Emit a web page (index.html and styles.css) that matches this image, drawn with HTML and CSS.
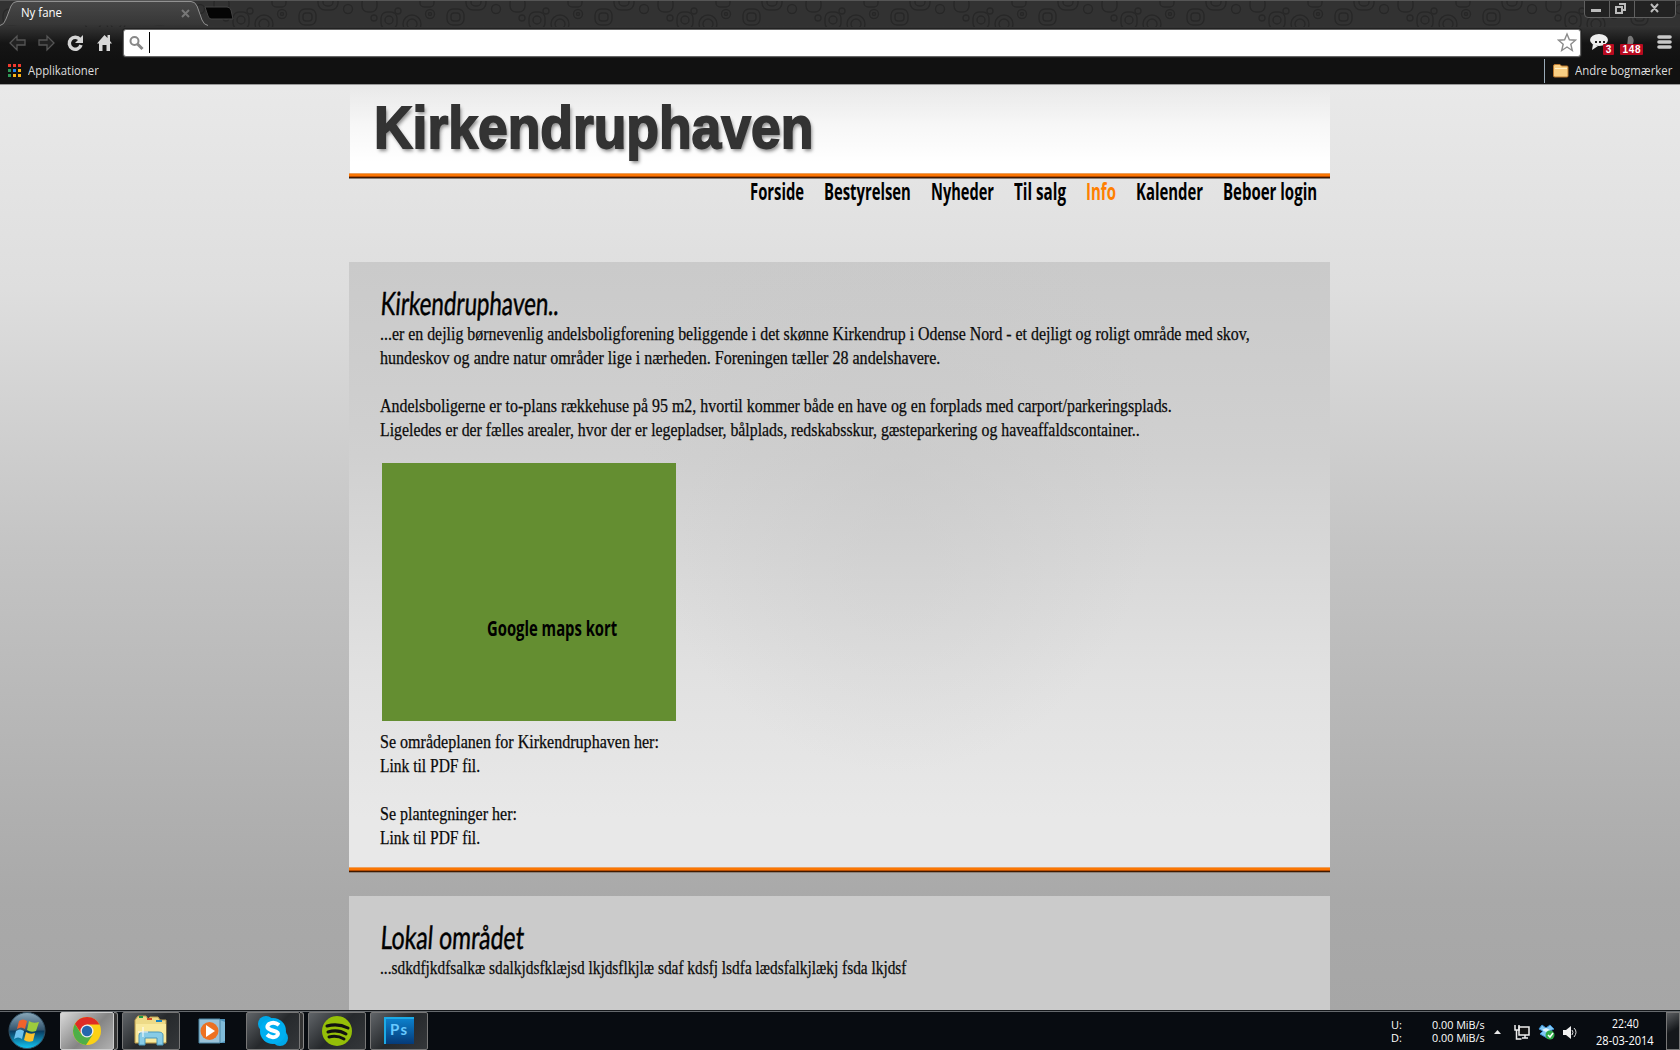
FILE: index.html
```html
<!DOCTYPE html>
<html lang="da"><head><meta charset="utf-8"><title>Ny fane</title><link rel="stylesheet" href="styles.css"></head>
<body>
<header class="chrome">
  <div class="tabs">
    <svg class="tabshape" width="238" height="26" viewBox="0 0 238 26"><defs><pattern id="rings" width="148" height="29" patternUnits="userSpaceOnUse"><g fill="none" stroke="#272727" stroke-width="1.500"><rect x="3" y="8" width="17" height="16" rx="6"/><rect x="7" y="12" width="9" height="8" rx="3"/><rect x="22" y="-8" width="20" height="17" rx="7"/><rect x="27" y="-5" width="10" height="10" rx="4"/><circle cx="52" cy="8" r="4.500"/><rect x="66" y="-4" width="15" height="15" rx="6"/><circle cx="78" cy="17" r="3"/><rect x="85" y="11" width="16" height="17" rx="6"/><circle cx="93" cy="19" r="4"/><circle cx="102" cy="10" r="3"/><circle cx="116" cy="23" r="9"/><circle cx="116" cy="23" r="5"/><rect x="124" y="-5" width="14" height="11" rx="4"/><circle cx="134" cy="13" r="4.500"/><circle cx="134" cy="13" r="1.500"/></g></pattern><linearGradient id="tg" x2="0" y2="1"><stop stop-color="#484848"/><stop offset="1" stop-color="#363636"/></linearGradient></defs><path d="M0 25.500Q4 25 6 19L11 6Q13 1.500 17 1.500H191Q195 1.500 197 6L202 20Q204 25 208 25.500" fill="url(#tg)" stroke="#929292"/><path d="M205 7H227Q230 7 231 10L233 19H211Q209 19 208 16Z" fill="#050505" stroke="#444"/></svg>
    <svg class="pattern" width="1680" height="26"><rect width="1680" height="26" fill="url(#rings)"/></svg>
    <span class="tabname" data-fit="41">Ny fane</span>
    <svg class="tabclose" width="9" height="9" viewBox="0 0 9 9"><path d="M1 1l7 7M8 1L1 8" stroke="#777" stroke-width="2"/></svg>
    <svg class="winbtns" width="94" height="18" viewBox="0 0 94 18"><path d="M.5 0V13Q.5 16.500 4 16.500H88Q91.500 16.500 91.500 13V0M25.500 0V16M50.500 0V16" fill="#222" stroke="#606060"/><path d="M7 8h10v3H7z" fill="#bbb"/><g fill="none" stroke="#bbb" stroke-width="2"><path d="M35 3h6v6h-2M32 6h6v6h-6zM67 3l7 8M74 3l-7 8"/></g></svg>
  </div>
  <div class="toolbar">
    <svg width="118" height="34" viewBox="0 0 118 34"><g fill="#222" stroke="#555" stroke-width="1.300"><path d="M10 17l7-7v4h8v5h-8v5zM54 17l-7-7v4h-8v5h8v5z"/></g><path d="M80 13.500A6 6 0 1 0 81 19" fill="none" stroke="#d4d4d4" stroke-width="3.500"/><path d="M83 9v8h-8z" fill="#d4d4d4"/><path d="M97 17.500L104.500 9l3 3V9h2.500v6l2 2.500h-2V25h-3.500v-6h-4v6H99v-7.500z" fill="#d8d8d8"/></svg>
    <div class="omni"><svg width="34" height="26" viewBox="0 0 34 26"><circle cx="10.500" cy="11" r="4" fill="none" stroke="#888" stroke-width="2"/><path d="M13.500 14l5 5" stroke="#888" stroke-width="3"/><path d="M25.500 2v21" stroke="#000"/></svg><svg width="23" height="24" viewBox="0 0 23 24"><path d="M10 3l2.400 5.800 6.100.4-4.700 4 1.500 6.300L10 16l-5.300 3.500 1.500-6.300-4.700-4 6.100-.4z" fill="#fff" stroke="#8b8b8b" stroke-width="1.400"/></svg></div>
    <svg width="99" height="34" viewBox="1581 27 99 34"><ellipse cx="1599" cy="41" rx="9" ry="6" fill="#eee"/><path d="M1593 45l-1 6 6-4z" fill="#eee"/><path d="M1595 43h2m2 0h2m2 0h2" stroke="#222" stroke-width="2"/><rect x="1603" y="45" width="11" height="11" rx="1" fill="#b90a20"/><text x="1608.500" y="54" class="badge">3</text><path d="M1628 38q3-3 5 1t-2 9h-4z" fill="#777"/><rect x="1620" y="45" width="23" height="11" rx="1" fill="#b90a20"/><text x="1631.500" y="54" class="badge" textLength="18">148</text><path d="M1659 38h11m-11 5h11m-11 5h11" stroke="#c8c8c8" stroke-width="3.600" stroke-linecap="round"/></svg>
  </div>
  <div class="bookmarks">
    <svg width="14" height="14" viewBox="0 0 14 14"><path d="M0 0h3v3H0zM5 0h3v3H5zM10 0h3v3h-3z" fill="#f03a2e"/><path d="M0 5h3v3H0zM0 10h3v3H0z" fill="#2f9a58"/><path d="M5 5h3v3H5z" fill="#2385ef"/><path d="M10 5h3v3h-3zM5 10h3v3H5zM10 10h3v3h-3z" fill="#fbb117"/></svg>
    <span class="bm" data-fit="71">Applikationer</span><i class="sep"></i>
    <svg class="folder" width="16" height="14" viewBox="0 0 16 14"><path d="M.5 12V2q0-1.500 1.500-1.500h5L8.500 2H14q1 0 1 1v9q0 1-1 1H2q-1.500 0-1.500-1z" fill="#f9cf83" stroke="#b9762d"/><path d="M2 4.500h12" stroke="#fff0c8"/></svg>
    <span class="bm" data-fit="97">Andre bogmærker</span>
  </div>
</header>
<main class="page">
  <div class="column">
    <div class="masthead"><h1 data-fit="439">Kirkendruphaven</h1></div>
    <div class="rule"></div>
    <nav><a data-fit="54">Forside</a><a data-fit="87">Bestyrelsen</a><a data-fit="63">Nyheder</a><a data-fit="52">Til salg</a><a class="active" data-fit="30">Info</a><a data-fit="67">Kalender</a><a data-fit="94">Beboer login</a></nav>
    <section class="panel first">
      <h2><span data-fit="178">Kirkendruphaven..</span></h2>
      <p><span data-fit="870">...er en dejlig børnevenlig andelsboligforening beliggende i det skønne Kirkendrup i Odense Nord - et dejligt og roligt område med skov,</span></p>
      <p><span data-fit="560">hundeskov og andre natur områder lige i nærheden. Foreningen tæller 28 andelshavere.</span></p>
      <p class="gap"><span data-fit="792">Andelsboligerne er to-plans rækkehuse på 95 m2, hvortil kommer både en have og en forplads med carport/parkeringsplads.</span></p>
      <p><span data-fit="760">Ligeledes er der fælles arealer, hvor der er legepladser, bålplads, redskabsskur, gæsteparkering og haveaffaldscontainer..</span></p>
      <div class="map"><span data-fit="130">Google maps kort</span></div>
      <p><span data-fit="279">Se områdeplanen for Kirkendruphaven her:</span></p>
      <p><span data-fit="100">Link til PDF fil.</span></p>
      <p class="gap"><span data-fit="137">Se plantegninger her:</span></p>
      <p><span data-fit="100">Link til PDF fil.</span></p>
    </section>
    <div class="rule"></div>
    <section class="panel second">
      <h2><span data-fit="143">Lokal området</span></h2>
      <p><span data-fit="526">...sdkdfjkdfsalkæ sdalkjdsfklæjsd lkjdsflkjlæ sdaf kdsfj lsdfa lædsfalkjlækj fsda lkjdsf</span></p>
    </section>
  </div>
</main>
<footer class="taskbar">
  <svg class="start" width="54" height="39" viewBox="0 1 54 39"><defs><linearGradient id="orb" x2="0" y2="1"><stop stop-color="#8aa9bb"/><stop offset=".48" stop-color="#34556e"/><stop offset=".52" stop-color="#0a3c60"/><stop offset="1" stop-color="#13c8f5"/></linearGradient></defs><circle cx="27" cy="19.500" r="18" fill="url(#orb)" stroke="#315063"/><path d="M19 10q4-3 8 0l-2 8q-4-3-8 0z" fill="#f2622b"/><path d="M29 10q4 3 10 1l-3 9q-5 2-9-1z" fill="#9dcc3c"/><path d="M16 20q4-3 8 0l-2 8q-4-3-8 0z" fill="#6fc3ee"/><path d="M26 21q4 3 9 1l-2 8q-5 2-9-1z" fill="#fcc22c"/></svg>
  <div class="task bright"><svg width="30" height="30" viewBox="0 0 30 30"><circle cx="15" cy="15" r="14" fill="#fbd116"/><path d="M2.900 8A14 14 0 0 1 27.500 8.500H15L9 17z" fill="#df2d25"/><path d="M2.900 8A14 14 0 0 0 14 29L20.500 19 9.500 18.500z" fill="#4eae48"/><circle cx="15" cy="15" r="6.500" fill="#eee"/><circle cx="15" cy="15" r="5.200" fill="#2467ad"/></svg></div><i class="stack"></i>
  <div class="task explorer"><svg width="34" height="32" viewBox="0 0 34 32"><path d="M1 5l3-4h8l2 3 2-2h8l2 3h6v23H1z" fill="#edda87" stroke="#bd9e4e"/><path d="M5 2h4" stroke="#199b45" stroke-width="2"/><path d="M13 4h5" stroke="#d54a25" stroke-width="2"/><path d="M22 6h6" stroke="#1884c0" stroke-width="2"/><path d="M2 9h30v18H2z" fill="#f8e99d"/><path d="M5 30V20q0-3 4-3h15q5 0 5 3v10h-6v-7H11v7z" fill="#87cbe6" stroke="#4a97bb"/><path d="M9 12v10M4 17h10" stroke="#fff"/></svg></div>
  <svg class="player" width="30" height="28" viewBox="0 0 30 28"><path d="M4 1h23v24H4z" fill="#4e91b8"/><path d="M22 2l5 2v19l-5 2z" fill="#80bbd9"/><path d="M1 1h21v24H1z" fill="#9bc3d9" stroke="#4b87a6"/><circle cx="11.500" cy="13" r="9" fill="#ed7121"/><path d="M8 7l9 6-9 6z" fill="#fff"/></svg>
  <div class="task skype"><svg width="32" height="32" viewBox="0 0 32 32"><circle cx="9" cy="9" r="8" fill="#00a8e8"/><circle cx="23" cy="23" r="8" fill="#00a8e8"/><circle cx="16" cy="16" r="13" fill="#00aff0"/><path d="M22 10Q17 6 12 9q-4 4 2 6l5 1.500q4 2 0 5-5 2-9-2" fill="none" stroke="#fff" stroke-width="4"/></svg></div><i class="stack"></i>
  <div class="task spotify"><svg width="32" height="32" viewBox="0 0 32 32"><circle cx="16" cy="16" r="15" fill="#95bf08"/><path d="M6 11q11-3 21 2M7 17q10-3 18 2M8 22q8-2 15 2" fill="none" stroke="#111" stroke-width="3" stroke-linecap="round"/></svg></div>
  <div class="task ps"><svg width="32" height="30" viewBox="0 0 32 30"><defs><linearGradient id="psg" x2="0" y2="1"><stop stop-color="#0c83cf"/><stop offset="1" stop-color="#053a78"/></linearGradient></defs><path d="M2 2h29v26H2z" fill="url(#psg)"/><path d="M1 1h30v2H3v25H1z" fill="#1caae5"/><text x="7" y="19" class="pstext" textLength="17">Ps</text></svg></div>
  <div class="tray">
    <div class="net"><span>U:</span><span data-fit="53">0.00 MiB/s</span><span>D:</span><span data-fit="53">0.00 MiB/s</span></div>
    <svg width="94" height="39" viewBox="1490 1011 94 39"><path d="M1494 1033l3.500-4 3.500 4z" fill="#e8e8e8"/><path d="M1519 1026h10v8h-10zM1522 1037h6M1525 1034v3" fill="#111" stroke="#eee" stroke-width="1.500"/><path d="M1515 1024v5h4v-5M1516.500 1029v9h5" fill="none" stroke="#eee" stroke-width="1.500"/><path d="M1542 1024l4 3 4-3 4 4-4 2 3 3-6 4-7-4 3-3-4-2z" fill="#82c9f5" stroke="#3b8fd0"/><path d="M1542 1029l4-2 4 2-4 2z" fill="#dff5ff"/><circle cx="1550" cy="1034" r="4.500" fill="#30aa48"/><path d="M1548 1034l2 2 3-4" fill="none" stroke="#fff" stroke-width="1.500"/><path d="M1563 1029h3l5-4v13l-5-4h-3z" fill="#f2f2f2"/><path d="M1572 1029q2 2 0 5M1574 1027q4 4 0 9" fill="none" stroke="#ddd"/></svg>
    <div class="clock"><span data-fit="27">22:40</span><span data-fit="58">28-03-2014</span></div><i class="desktop"></i>
  </div>
</footer>
<script src="fit.js"></script>
</body></html>
```
FILE: styles.css
```css
*{box-sizing:border-box}
body{margin:0;width:1680px;height:1050px;overflow:hidden;display:flex;flex-direction:column;font-family:"Open Sans",sans-serif}
svg{display:block;flex:none}
[data-fit]{display:inline-block;white-space:nowrap;transform-origin:0 50%;flex:none}
h1,h2,p{margin:0}
.chrome{height:85px;background:#111;border-bottom:1px solid #999;flex:none}
.tabs{height:26px;position:relative;background:#323232;border-top:1px solid #555;display:flex;align-items:flex-start}
.pattern{position:absolute;left:0;top:0}
.tabshape{position:relative;z-index:1;margin-top:-1px}
.tabname{position:absolute;z-index:2;left:21px;top:3px;font-size:12px;line-height:18px;color:#fff}
.tabclose{position:absolute;z-index:2;left:181px;top:8px}
.winbtns{position:relative;margin-left:auto;margin-right:2px}
.toolbar{height:34px;display:flex;align-items:center;background:linear-gradient(#343434,#151515 50%,#111)}
.omni{flex:1;margin-left:5px;height:28px;margin-top:-1px;background:#fff;border:1px solid #666;border-radius:3px;display:flex;justify-content:space-between;align-items:center;box-shadow:0 0 0 1px #222}
.badge{font:bold 10px "Liberation Sans",sans-serif;fill:#fff;text-anchor:middle}
.bookmarks{height:24px;display:flex;align-items:center;padding:0 8px;margin-top:-1px}
.bm{font-size:12px;line-height:18px;color:#ddd;margin-left:6px}
.sep{width:1px;height:24px;background:#9aabb8;margin-left:auto}
.folder{margin-left:8px}
.page{flex:1;min-height:0;overflow:hidden;background:linear-gradient(#e9e9e9,#dedede 22%,#c4c4c4 50%,#a9a9a9 88%,#a6a6a6)}
.column{width:981px;margin-left:349px}
.masthead{height:88px;padding:13px 0 0 24px;margin-left:1px;background:linear-gradient(#fff0,#fffa 45%,#fff 88%)}
h1{font:bold 60px/60px "Liberation Sans",sans-serif;color:#333;-webkit-text-stroke:1.800px #333;text-shadow:2px 3px 4px #888}
.rule{height:6px;background:linear-gradient(#eca15f 0 1px,#fb7603 1px 3px,#b94c00 3px 4px,#3f1900 4px 5px,#8a8079 5px)}
nav{display:flex;gap:20px;justify-content:flex-end;padding-right:13px;height:83px}
nav a{font-weight:700;font-size:22.500px;line-height:26px;height:26px;color:#000}
nav .active{color:#ff7f00}
.panel{padding:25px 30px 0 30.500px}
.first{height:605px;background:radial-gradient(ellipse 260px 300px at 550px 210px,#c8c8c888,#c8c8c800),linear-gradient(#cacaca,#d0d0d0 32%,#e1e1e1 68%,#e8e8e8 92%)}
.second{height:114px;margin-top:23px;background:#cbcbcb}
h2{font:400 32px/32px Lato,sans-serif;height:35px;color:#000;-webkit-text-stroke:.5px #000;transform:skewX(-4deg);transform-origin:0 80%}
p{font:18px/24px "Liberation Serif",serif;height:24px;color:#090909;-webkit-text-stroke:.25px #111}
.gap{margin-top:24px}
.map{width:294px;height:258px;margin:21px 0 9px 2.500px;background:#648e31;padding:149px 0 0 105px}
.map span{font-weight:700;font-size:22px;line-height:30px}
.taskbar{height:39px;flex:none;background:#080c11;border-top:1px solid #65696d;display:flex;align-items:flex-start;color:#fff;box-shadow:0 -1px #15181b;position:relative}
.task{width:58px;height:38px;border:1px solid #777;border-radius:2px;background:linear-gradient(135deg,#606468,#26292c 50%,#34373a);display:flex;align-items:center;justify-content:center}
.bright{width:54px;margin-left:6px;background:linear-gradient(135deg,#d8d8d8,#858585 55%,#b1b1b1);border-color:#ccc}
.stack{width:4px;height:38px;border:solid #888;border-width:1px 1px 1px 0;border-radius:0 3px 3px 0;background:#333}
.explorer{margin-left:4px}
.player{margin:6px 18px 0 18px}
.skype{width:54px}
.spotify{margin-left:4px}
.ps{margin-left:4px}
.pstext{font:bold 15px Lato,sans-serif;fill:#68caff}
.tray{margin-left:auto;display:flex;font-size:11px}
.net{display:grid;grid-template-columns:41px 58px;grid-template-rows:13px 13px;line-height:13px;padding-top:6px}
.clock{width:82px;display:flex;flex-direction:column;align-items:center;font-size:12px;line-height:17px;padding-top:3px}
.desktop{width:14px;height:38px;border:1px solid #777;background:linear-gradient(150deg,#5b5e61,#15181b 50%)}
```
FILE: fit.js
```js
document.querySelectorAll('[data-fit]').forEach(function (el) {
  var target = parseFloat(el.dataset.fit);
  el.style.width = 'max-content';
  var natural = el.offsetWidth;
  el.style.width = target + 'px';
  el.style.transform = 'scaleX(' + target / natural + ')';
});
```
